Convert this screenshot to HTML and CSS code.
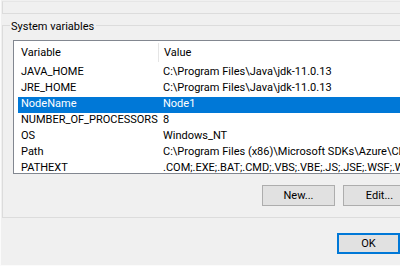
FILE: index.html
```html
<!DOCTYPE html>
<html>
<head>
<meta charset="utf-8">
<link rel="stylesheet" href="styles.css">
</head>
<body>
<div class="dialog">
  <div class="userbox"></div>
  <div class="sysbox">
    <span class="legend">System variables</span>
    <div class="listbox">
      <div class="header">
        <div class="col1">Variable</div>
        <div class="col2 divided">Value</div>
      </div>
      <div class="row"><div class="col1">JAVA_HOME</div><div class="col2">C:\Program Files\Java\jdk-11.0.13</div></div>
      <div class="row"><div class="col1">JRE_HOME</div><div class="col2">C:\Program Files\Java\jdk-11.0.13</div></div>
      <div class="row selected"><div class="col1">NodeName</div><div class="col2">Node1</div></div>
      <div class="row"><div class="col1">NUMBER_OF_PROCESSORS</div><div class="col2">8</div></div>
      <div class="row"><div class="col1">OS</div><div class="col2">Windows_NT</div></div>
      <div class="row"><div class="col1">Path</div><div class="col2">C:\Program Files (x86)\Microsoft SDKs\Azure\CLI2\wbin;C:\Windows</div></div>
      <div class="row"><div class="col1">PATHEXT</div><div class="col2">.COM;.EXE;.BAT;.CMD;.VBS;.VBE;.JS;.JSE;.WSF;.WSH;.MSC</div></div>
    </div>
    <div class="buttons">
      <button class="btn">New...</button>
      <button class="btn">Edit...</button>
    </div>
  </div>
  <div class="footer">
    <button class="btn default">OK</button>
  </div>
</div>
</body>
</html>
```
FILE: styles.css
```css
html, body {
  margin: 0;
  padding: 0;
  background: #f0f0f0;
  overflow: hidden;
}
.dialog {
  width: 400px;
  height: 266px;
  box-sizing: border-box;
  border-left: 1px solid #fbfbfb;
  border-bottom: 1px solid #fbfbfb;
  font-family: Roboto, "Liberation Sans", sans-serif;
  font-size: 11px;
  line-height: 14px;
  color: #000;
  overflow: hidden;
}
.userbox {
  margin-left: 1px;
  margin-top: 1px;
  height: 11px;
  border-top: 1px solid #e6e6e6;
  border-left: 1px solid #dcdcdc;
  border-bottom: 1px solid #dcdcdc;
}
.sysbox {
  position: relative;
  margin-left: 1px;
  margin-top: 11px;
  width: 520px;
  border: 1px solid #dcdcdc;
  border-right: 0;
  padding: 14px 0 11px 10px;
}
.legend {
  position: absolute;
  top: -6px;
  left: 7px;
  padding: 0 2px 0 1px;
  background: #f0f0f0;
}
.listbox {
  width: 500px;
  height: 134px;
  box-sizing: border-box;
  border: 1px solid #828790;
  background: #fff;
  overflow: hidden;
  padding-left: 4px;
}
.header {
  display: flex;
  align-items: flex-start;
  height: 24px;
  padding-top: 2px;
  box-sizing: border-box;
}
.header .col1 {
  padding-top: 3px;
}
.row {
  display: flex;
  height: 16px;
  white-space: nowrap;
}
.col1 {
  width: 137px;
  padding-left: 3px;
  flex: none;
}
.col2 {
  padding-left: 5px;
  flex: none;
}
.divided {
  border-left: 1px solid #e5e5e5;
  height: 19px;
  box-sizing: border-box;
  padding-top: 3px;
  padding-left: 5px;
}
.selected {
  background: #0078d7;
  color: #fff;
}
.buttons {
  display: flex;
  gap: 8px;
  margin-top: 11px;
  padding-left: 249px;
}
.btn {
  width: 73px;
  height: 21px;
  box-sizing: border-box;
  border: 1px solid #adadad;
  background: #e1e1e1;
  font-family: Roboto, "Liberation Sans", sans-serif;
  font-size: 11px;
  color: #000;
  padding: 0;
  margin: 0;
}
.footer {
  display: flex;
  padding-left: 336px;
  margin-top: 15px;
}
.default {
  width: 75px;
  border: 2px solid #0078d7;
}
```
